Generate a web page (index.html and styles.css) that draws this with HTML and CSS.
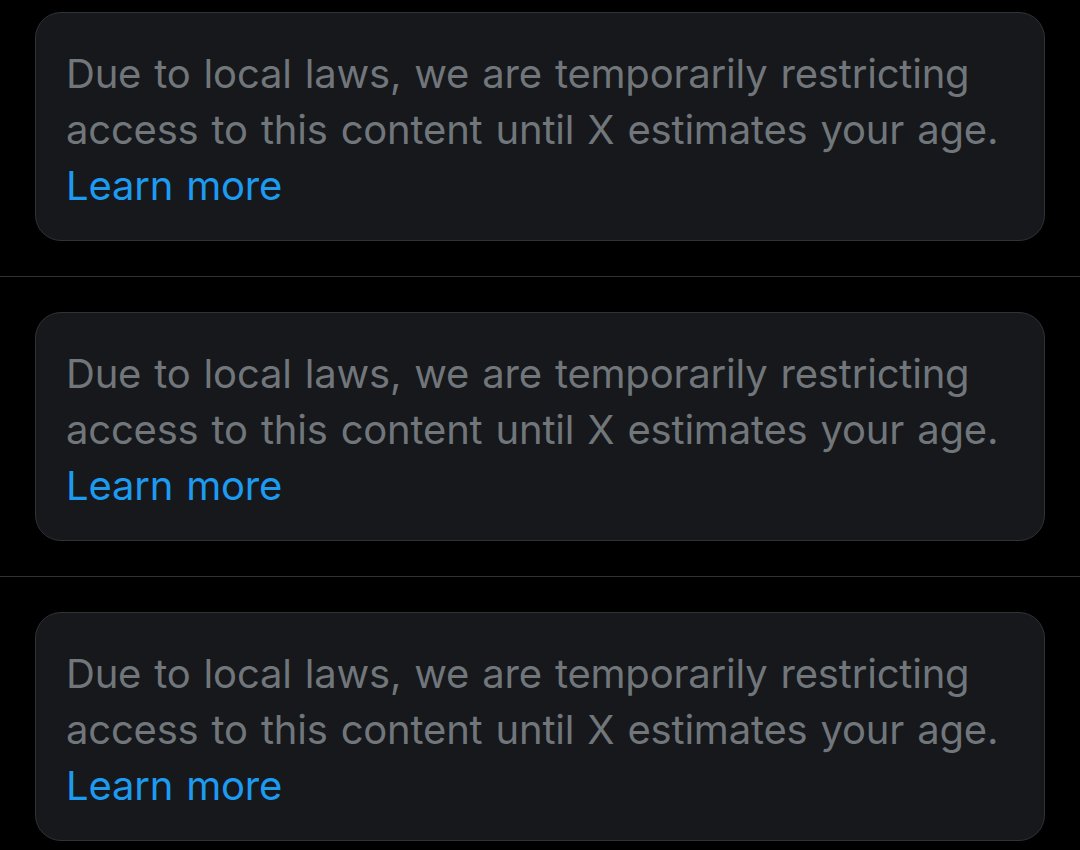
FILE: index.html
```html
<!DOCTYPE html>
<html lang="en">
<head>
<meta charset="utf-8">
<title>Restricted content</title>
<link rel="stylesheet" href="styles.css">
</head>
<body>
<div class="feed">
  <div class="item">
    <div class="notice">
      <p class="msg">Due to local laws, we are temporarily restricting access to this content until X estimates your age. <a class="link" href="#">Learn more</a></p>
    </div>
  </div>
  <div class="item">
    <div class="notice">
      <p class="msg">Due to local laws, we are temporarily restricting access to this content until X estimates your age. <a class="link" href="#">Learn more</a></p>
    </div>
  </div>
  <div class="item">
    <div class="notice">
      <p class="msg">Due to local laws, we are temporarily restricting access to this content until X estimates your age. <a class="link" href="#">Learn more</a></p>
    </div>
  </div>
</div>
</body>
</html>
```
FILE: styles.css
```css
html, body {
  margin: 0;
  padding: 0;
  background: #000;
}
body {
  font-family: Inter, "Liberation Sans", sans-serif;
  width: 1080px;
  height: 850px;
  overflow: hidden;
}
.feed {
  display: flex;
  flex-direction: column;
}
.item {
  padding: 35px 35px 35px 35px;
  border-bottom: 1px solid #2f3336;
}
.item:first-child {
  padding-top: 12px;
}
.notice {
  background: #16181c;
  border: 1px solid #2f3336;
  border-radius: 26px;
  padding: 33px 30px 26px 30px;
  height: 229px;
  box-sizing: border-box;
}
.msg {
  margin: 0;
  font-size: 40px;
  line-height: 56px;
  color: #71767b;
  letter-spacing: -0.2px;
  word-spacing: 2px;
}
.link {
  color: #1d9bf0;
  text-decoration: none;
}
```
